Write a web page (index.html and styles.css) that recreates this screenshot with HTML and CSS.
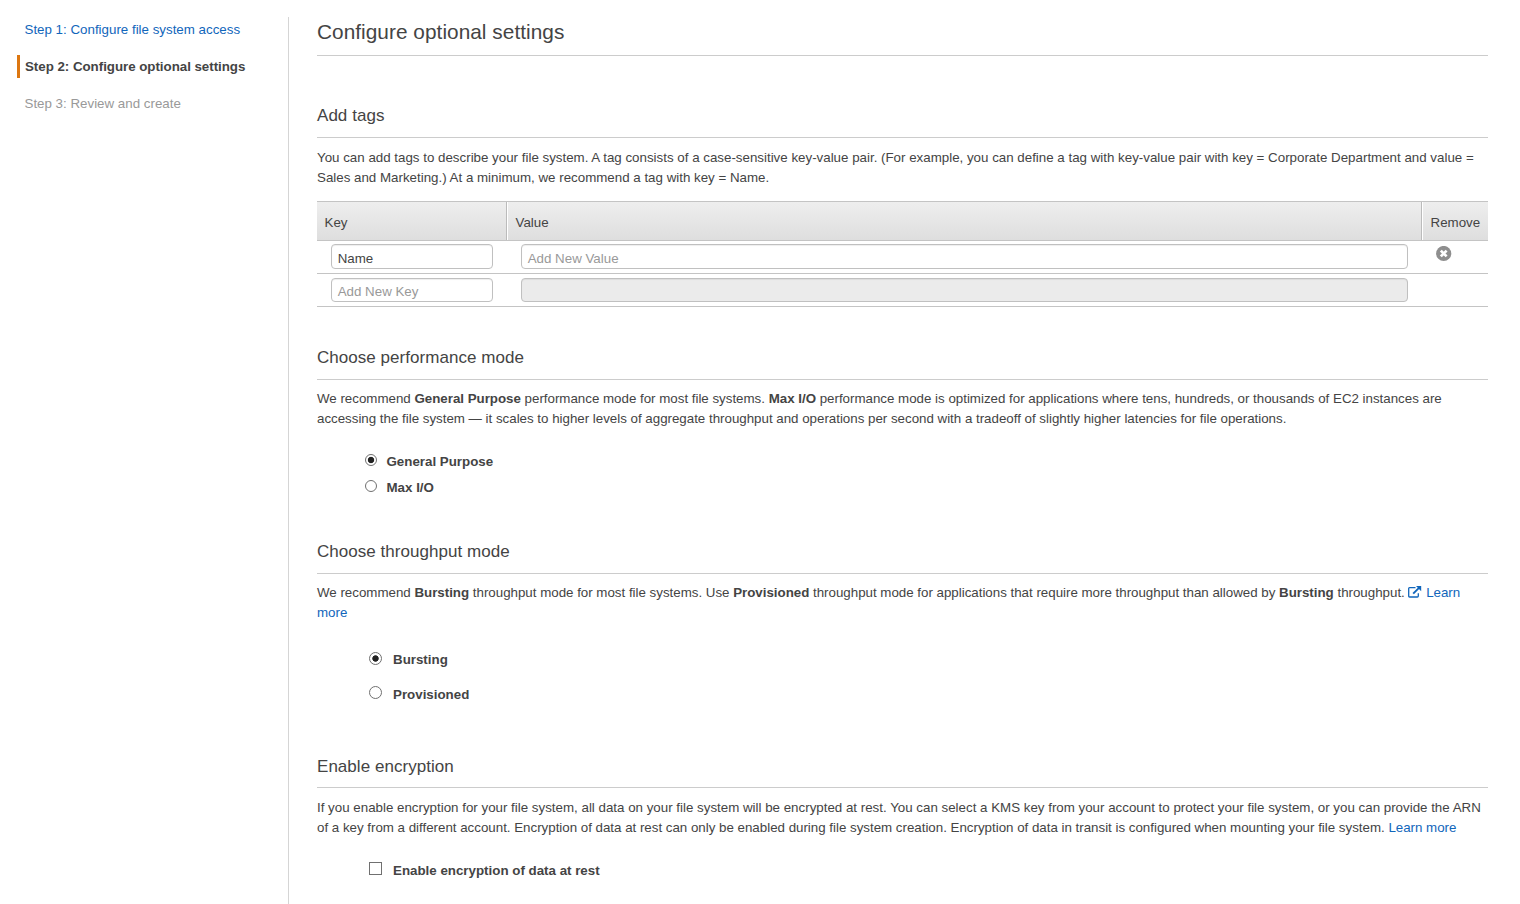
FILE: index.html
```html
<!DOCTYPE html>
<html lang="en">
<head>
<meta charset="utf-8">
<title>Configure optional settings</title>
<link rel="stylesheet" href="styles.css">
</head>
<body>
<div class="page">
  <nav class="steps">
    <a class="step step-link"><span>Step 1: Configure file system access</span></a>
    <a class="step step-current"><span>Step 2: Configure optional settings</span></a>
    <a class="step step-future"><span>Step 3: Review and create</span></a>
  </nav>
  <main class="content">
    <h1><span>Configure optional settings</span></h1>

    <section class="section tags">
      <h2><span>Add tags</span></h2>
      <p><span>You can add tags to describe your file system. A tag consists of a case-sensitive key-value pair. (For example, you can define a tag with key-value pair with key = Corporate Department and value =</span><br><span>Sales and Marketing.) At a minimum, we recommend a tag with key = Name.</span></p>
      <div class="table">
        <div class="row head"><div class="cell"><span>Key</span></div><div class="cell"><span>Value</span></div><div class="cell"><span>Remove</span></div></div>
        <div class="row">
          <div class="field dark"><span>Name</span></div>
          <div class="field wide"><span>Add New Value</span></div>
          <svg class="remove" width="16" height="16" viewBox="0 0 16 16"><circle cx="7.7" cy="7.5" r="7.6" fill="#8e8e8e"/><path d="M4.8 4.6l5.8 5.8M10.6 4.6l-5.8 5.8" stroke="#fff" stroke-width="2.7"/></svg>
        </div>
        <div class="row last">
          <div class="field"><span>Add New Key</span></div>
          <div class="field wide disabled"></div>
        </div>
      </div>
    </section>

    <section class="section performance">
      <h2><span>Choose performance mode</span></h2>
      <p><span>We recommend <b>General Purpose</b> performance mode for most file systems. <b>Max I/O</b> performance mode is optimized for applications where tens, hundreds, or thousands of EC2 instances are</span><br><span class="tight">accessing the file system — it scales to higher levels of aggregate throughput and operations per second with a tradeoff of slightly higher latencies for file operations.</span></p>
      <div class="options compact">
        <label class="option"><i class="radio on"></i><span>General Purpose</span></label>
        <label class="option"><i class="radio"></i><span>Max I/O</span></label>
      </div>
    </section>

    <section class="section throughput">
      <h2><span>Choose throughput mode</span></h2>
      <p><span>We recommend <b>Bursting</b> throughput mode for most file systems. Use <b>Provisioned</b> throughput mode for applications that require more throughput than allowed by <b>Bursting</b> throughput. <a><svg class="ext" width="14" height="12" viewBox="0 0 14 12"><path d="M7.5 1.7H1.5Q.7 1.7 .7 2.5v7.7Q.7 11 1.5 11h7.8Q10.3 11 10.3 10V7.2" fill="none" stroke="#1166bb" stroke-width="1.3"/><path d="M5.2 7.6L11 1.8" stroke="#1166bb" stroke-width="1.9"/><path d="M8 0H13.2V5.2z" fill="#1166bb"/></svg> Learn</a></span><br><span><a>more</a></span></p>
      <div class="options">
        <label class="option"><i class="radio on"></i><span>Bursting</span></label>
        <label class="option"><i class="radio"></i><span>Provisioned</span></label>
      </div>
    </section>

    <section class="section encryption">
      <h2><span>Enable encryption</span></h2>
      <p><span>If you enable encryption for your file system, all data on your file system will be encrypted at rest. You can select a KMS key from your account to protect your file system, or you can provide the ARN</span><br><span class="tight">of a key from a different account. Encryption of data at rest can only be enabled during file system creation. Encryption of data in transit is configured when mounting your file system. <a>Learn more</a></span></p>
      <div class="options">
        <label class="option"><i class="check"></i><span>Enable encryption of data at rest</span></label>
      </div>
    </section>
  </main>
</div>
</body>
</html>
```
FILE: styles.css
```css
* { box-sizing: border-box; }
body {
  margin: 0;
  background: #fff;
  color: #444;
  font: 13.33px/20px "Liberation Sans", Arial, sans-serif;
  overflow: hidden;
}
a { color: #1166bb; }
.page { display: flex; height: 904px; padding-top: 17px; }
.steps {
  width: 289px;
  border-right: 1px solid #d5d5d5;
  padding-left: 17px;
  display: flex;
  flex-direction: column;
  gap: 14px;
}
.step {
  height: 23px;
  margin: 1px 0 -1px;
  line-height: 23px;
  padding-left: 7.5px;
  white-space: nowrap;
}
.step-current {
  border-left: 3px solid #dd7711;
  padding-left: 5px;
  font-weight: bold;
  letter-spacing: -0.03px;
  color: #444;
}
.step-future { color: #999; }
.content { margin-left: 28px; width: 1171px; }
h1 {
  margin: 0;
  height: 39px;
  border-bottom: 1px solid #ccc;
  font-size: 20.8px;
  font-weight: normal;
  letter-spacing: 0.04px;
  line-height: 30px;
}
h2 {
  margin: 0 0 9px;
  height: 35px;
  border-bottom: 1px solid #ccc;
  font-size: 17px;
  font-weight: normal;
  letter-spacing: 0.04px;
  line-height: 26px;
}
p { margin: 0; white-space: nowrap; }
.performance p, .throughput p { letter-spacing: -0.01px; }
.tight { letter-spacing: -0.01px; }
.section { height: 194px; }
.tags { height: 242px; margin-top: 47px; }
.tags h2 { margin-bottom: 10px; }
.throughput { height: 215px; }
.table { margin-top: 13px; border-top: 1px solid #c4c4c4; }
.row { display: flex; height: 33px; border-bottom: 1px solid #c4c4c4; padding: 3px 0 0 14px; }
.head { height: 39px; padding: 0; background: linear-gradient(#eee, #dedede); }
.cell { line-height: 42px; padding-left: 7.5px; width: 66px; }
.cell + .cell { border-left: 1px solid #fff; box-shadow: -1px 0 #bbb; }
.cell:first-child { width: 190px; }
.cell:nth-child(2) { width: 915px; }
.field {
  width: 162px;
  height: 25px;
  margin-right: 28px;
  border: 1px solid #c0c0c0;
  border-radius: 4px;
  padding-left: 5.7px;
  line-height: 27px;
  color: #999;
  box-shadow: inset 0 1px 1px #eee;
}
.dark { color: #444; }
.wide { width: 887px; }
.last { padding-top: 4px; }
.last .field { height: 24px; line-height: 26px; }
.disabled { background: #ebebeb; box-shadow: inset 0 1px 1px #ddd; }
.remove { margin-top: 2px; }
.options { margin: 27px 0 0 52px; display: flex; flex-direction: column; gap: 15px; font-weight: bold; }
.option { display: flex; gap: 11px; height: 20px; }
.compact { margin: 23px 0 0 48px; gap: 6px; }
.compact .option { gap: 9.5px; }
.radio, .check {
  width: 13px;
  height: 13px;
  border: 1px solid #707070;
  margin-top: 2px;
}
.radio { border-radius: 50%; background: #fff; }
.on { background: radial-gradient(circle, #222 0 2.8px, #fff 3.6px); }
.compact .radio { width: 12px; height: 12px; }
.throughput .option + .option .radio { margin-top: 1px; }
.encryption h2 { height: 34px; margin-bottom: 10px; }
.encryption .options { margin-top: 23px; }
.encryption .check { margin-top: 1px; }
.ext { vertical-align: -1px; }
```
